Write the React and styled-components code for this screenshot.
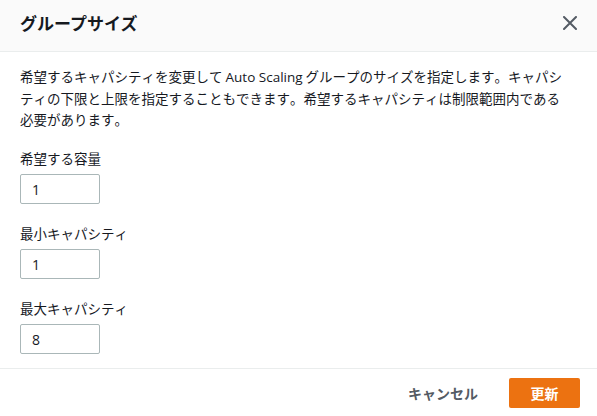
import React from "react";
import styled, { createGlobalStyle } from "styled-components";

const Global = createGlobalStyle`
  html, body { margin: 0; padding: 0; background: #fff; }
  body { font-family: "Open Sans", "Noto Sans CJK JP", sans-serif; color: #16191f; }
  * { box-sizing: border-box; }
`;

const Dialog = styled.div`
  width: 597px;
  height: 416px;
  display: flex;
  flex-direction: column;
  background: #fff;
  overflow: hidden;
`;

const Header = styled.div`
  height: 52px;
  flex: none;
  display: flex;
  align-items: flex-start;
  justify-content: space-between;
  padding: 12px 19px 0 20px;
  background: #fafafa;
  border-bottom: 1px solid #eaeded;
`;

const Title = styled.h2`
  margin: 0;
  font-size: 17px;
  font-weight: 700;
  line-height: 22px;
  color: #16191f;
  font-family: "Noto Sans CJK JP", sans-serif;
`;

const CloseButton = styled.button`
  border: 0;
  background: none;
  padding: 0;
  margin-top: 3px;
  width: 16px;
  height: 16px;
  display: flex;
  align-items: center;
  justify-content: center;
  cursor: pointer;
`;

const Body = styled.div`
  flex: 1;
  min-height: 0;
  padding: 14px 20px 0 20px;
  display: flex;
  flex-direction: column;
`;

const Description = styled.p`
  margin: 0 0 18px 0;
  font-size: 13.5px;
  line-height: 21px;
  color: #16191f;
  font-family: "Noto Sans CJK JP", sans-serif;
  font-kerning: none;
  white-space: nowrap;
`;

const Latin = styled.span`
  font-family: "Open Sans", sans-serif;
  font-kerning: normal;
`;

const Fields = styled.div`
  display: flex;
  flex-direction: column;
  gap: 19px;
`;

const Field = styled.div`
  display: flex;
  flex-direction: column;
  gap: 5px;
`;

const Label = styled.label`
  font-size: 13.5px;
  line-height: 21px;
  color: #16191f;
  font-family: "Noto Sans CJK JP", sans-serif;
  font-kerning: none;
`;

const Input = styled.input`
  width: 80px;
  height: 30px;
  border: 1px solid #aab7b8;
  border-radius: 2px;
  padding: 0 11px;
  font-size: 14px;
  font-family: "Open Sans", sans-serif;
  color: #16191f;
  outline: none;
`;

const Footer = styled.div`
  height: 48px;
  flex: none;
  border-top: 1px solid #eaeded;
  display: flex;
  justify-content: flex-end;
  align-items: flex-start;
  padding: 9px 17px 0 0;
  gap: 31px;
`;

const TextButton = styled.button`
  border: 0;
  background: none;
  height: 30px;
  padding: 0;
  font-size: 14px;
  font-weight: 700;
  color: #545b64;
  font-family: "Noto Sans CJK JP", sans-serif;
`;

const PrimaryButton = styled.button`
  border: 0;
  background: #ec7211;
  color: #fff;
  height: 30px;
  width: 71px;
  border-radius: 2px;
  font-size: 14px;
  font-weight: 700;
  font-family: "Noto Sans CJK JP", sans-serif;
`;

const fields = [
  { label: "希望する容量", value: "1" },
  { label: "最小キャパシティ", value: "1" },
  { label: "最大キャパシティ", value: "8" },
];

export default function App() {
  return (
    <>
      <Global />
      <Dialog>
        <Header>
          <Title>グループサイズ</Title>
          <CloseButton aria-label="閉じる">
            <svg width="14" height="14" viewBox="0 0 14 14">
              <path d="M1 1 L13 13 M13 1 L1 13" stroke="#545b64" strokeWidth="2" strokeLinecap="round" />
            </svg>
          </CloseButton>
        </Header>
        <Body>
          <Description>
            希望するキャパシティを変更して <Latin>Auto Scaling</Latin> グループのサイズを指定します。キャパシ
            <br />
            ティの下限と上限を指定することもできます。希望するキャパシティは制限範囲内である
            <br />
            必要があります。
          </Description>
          <Fields>
            {fields.map((f) => (
              <Field key={f.label}>
                <Label>{f.label}</Label>
                <Input defaultValue={f.value} />
              </Field>
            ))}
          </Fields>
        </Body>
        <Footer>
          <TextButton>キャンセル</TextButton>
          <PrimaryButton>更新</PrimaryButton>
        </Footer>
      </Dialog>
    </>
  );
}
